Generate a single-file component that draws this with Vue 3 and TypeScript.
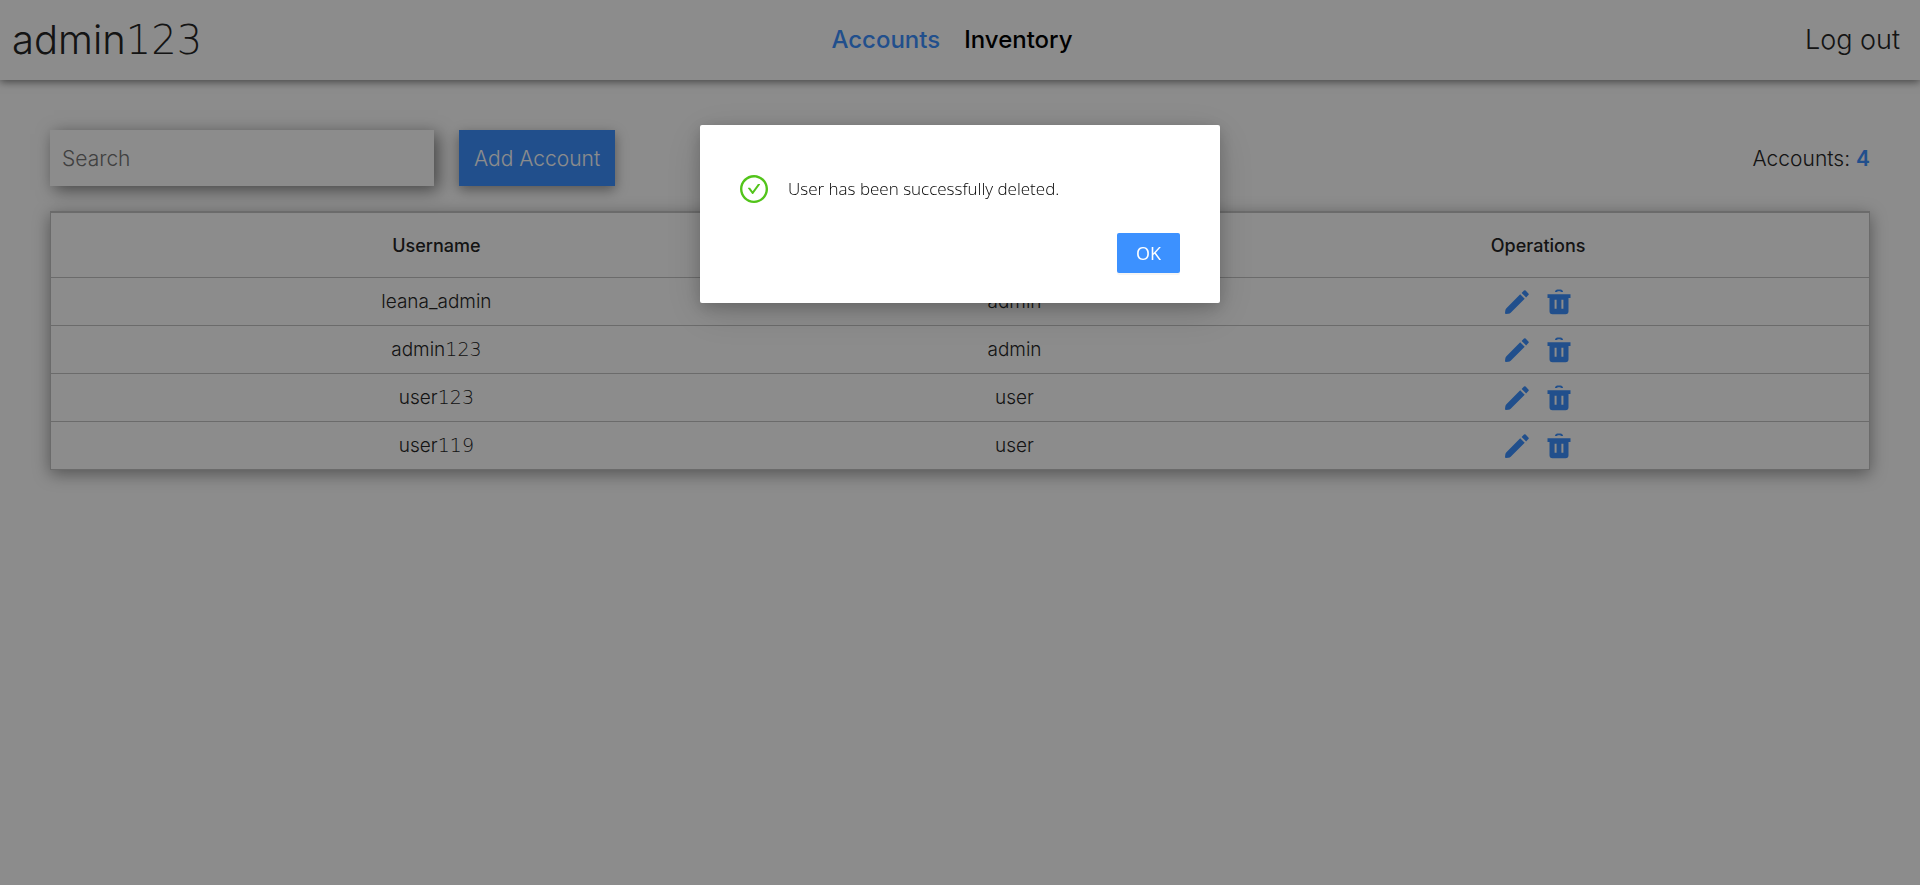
<script setup lang="ts">
import { ref } from 'vue'

interface Account {
  username: string
  role: string
}

interface NamePart {
  text: string
  numeric: boolean
}

const search = ref('')
const currentUser = 'admin123'
const accounts: Account[] = [
  { username: 'leana_admin', role: 'admin' },
  { username: 'admin123', role: 'admin' },
  { username: 'user123', role: 'user' },
  { username: 'user119', role: 'user' },
]

// Digits in a username are set in a wider face than its letters.
function nameParts(name: string): NamePart[] {
  return (name.match(/\d+|\D+/g) ?? []).map((text) => ({ text, numeric: /\d/.test(text) }))
}
</script>

<template>
  <div class="page">
    <header class="topbar">
      <span class="brand"><span v-for="(part, i) in nameParts(currentUser)" :key="i" :class="{ digits: part.numeric }">{{ part.text }}</span></span>
      <nav class="nav">
        <a href="#accounts" class="active">Accounts</a>
        <a href="#inventory">Inventory</a>
      </nav>
      <button type="button" class="logout">Log out</button>
    </header>

    <main class="content">
      <div class="toolbar">
        <input v-model="search" class="search" type="text" placeholder="Search" aria-label="Search" />
        <button type="button" class="add">Add Account</button>
        <p class="count">Accounts: <strong>{{ accounts.length }}</strong></p>
      </div>

      <table class="accounts">
        <colgroup>
          <col class="col-name" />
          <col class="col-role" />
          <col class="col-ops" />
        </colgroup>
        <thead>
          <tr>
            <th scope="col">Username</th>
            <th scope="col"></th>
            <th scope="col">Operations</th>
          </tr>
        </thead>
        <tbody>
          <tr v-for="account in accounts" :key="account.username">
            <td><span v-for="(part, i) in nameParts(account.username)" :key="i" :class="{ digits: part.numeric }">{{ part.text }}</span></td>
            <td>{{ account.role }}</td>
            <td>
              <div class="ops">
                <button type="button" aria-label="Edit">
                  <svg viewBox="0 0 24 24" aria-hidden="true">
                    <path d="M15.2 4.2 19.7 8.7 5.7 22.7Q4.8 23.6 3.4 23.8L1 24Q0 24 0 23L.3 20.6Q.5 19.2 1.4 18.2Z" />
                    <path d="M16.6 2.9 19 .6Q19.8-.2 20.6.6L23.4 3.4Q24.2 4.2 23.4 5L21.1 7.4Z" />
                  </svg>
                </button>
                <button type="button" aria-label="Delete">
                  <svg viewBox="0 0 24 24" aria-hidden="true">
                    <path d="M8 1.4Q8.6-.5 10.4-.5H13.6Q15.4-.5 16 1.4V2H14Q13.6 1.3 13 1.3H11Q10.4 1.3 10 2H8Z" />
                    <path
                      fill-rule="evenodd"
                      d="M.5 4.2H23.5V8H21.5V21.3Q21.5 24.3 18.5 24.3H5.5Q2.5 24.3 2.5 21.3V8H.5ZM7.6 9.8V18.8H9.6V9.8ZM14.4 9.8V18.8H16.4V9.8Z"
                    />
                  </svg>
                </button>
              </div>
            </td>
          </tr>
        </tbody>
      </table>
    </main>

    <div class="scrim">
      <section class="dialog" role="alertdialog" aria-modal="true" aria-labelledby="dialog-message">
        <div class="message">
          <svg class="check" viewBox="64 64 896 896" aria-hidden="true">
            <path d="M699 353h-46.9c-10.2 0-19.9 4.9-25.9 13.3L469 584.3l-71.2-98.8c-6-8.3-15.6-13.3-25.9-13.3H325c-6.5 0-10.3 7.4-6.5 12.7l124.6 172.8a31.8 31.8 0 0051.7 0l210.6-292c3.9-5.3.1-12.7-6.4-12.7z" />
            <path d="M512 64C264.6 64 64 264.6 64 512s200.6 448 448 448 448-200.6 448-448S759.4 64 512 64zm0 820c-205.4 0-372-166.6-372-372s166.6-372 372-372 372 166.6 372 372-166.6 372-372 372z" />
          </svg>
          <p id="dialog-message">User has been successfully deleted.</p>
        </div>
        <button type="button" class="ok">OK</button>
      </section>
    </div>
  </div>
</template>

<style>
body {
  margin: 0;
  background: #fff;
}
</style>

<style scoped>
.page {
  min-height: 100vh;
  font-family: Inter, "Open Sans", sans-serif;
  font-size: 18px;
  font-weight: 300;
  color: #262626;
}

button,
input {
  box-sizing: border-box;
  margin: 0;
  border: 0;
  font: inherit;
}

button {
  cursor: pointer;
}

.digits {
  font-family: "DejaVu Sans", sans-serif;
  font-weight: 200;
}

.topbar {
  display: grid;
  grid-template-columns: 1fr auto 1fr;
  align-items: center;
  box-sizing: border-box;
  height: 80px;
  padding: 0 20px 2px 12px;
  background: #fff;
  box-shadow: 0 2px 8px rgba(0, 0, 0, 0.5);
}

.brand {
  font-size: 40px;
}

.nav {
  display: flex;
  gap: 24px;
  padding-right: 8px;
  font-size: 24px;
  font-weight: 500;
}

.nav a {
  color: #000;
  text-decoration: none;
}

.nav .active {
  color: #3c91ff;
}

.logout {
  justify-self: end;
  padding: 0;
  background: none;
  color: inherit;
  font-size: 27px;
}

.content {
  padding: 50px;
}

.toolbar {
  display: flex;
  align-items: center;
  gap: 25px;
  margin-bottom: 25px;
  font-size: 21px;
}

.search {
  width: 384px;
  height: 56px;
  padding: 0 12px;
  background: #fff;
  color: inherit;
  box-shadow: 4px 4px 16px rgba(0, 0, 0, 0.5);
}

.search::placeholder {
  color: #757575;
  opacity: 1;
}

.add {
  height: 56px;
  padding: 0 15px;
  background: #3c91ff;
  color: #fff;
  box-shadow: 0 4px 12px rgba(0, 0, 0, 0.4);
}

.count {
  margin: 0 0 0 auto;
}

.count strong {
  color: #3c91ff;
  font-weight: 600;
}

.accounts {
  width: 100%;
  table-layout: fixed;
  border-collapse: separate;
  border-spacing: 0;
  border: 1px solid #c4c4c4;
  border-top-width: 2px;
  background: #fff;
  box-shadow: 0 4px 16px rgba(0, 0, 0, 0.4);
}

.col-name {
  width: 42.4%;
}

.col-role {
  width: 21.2%;
}

.col-ops {
  width: 36.4%;
}

.accounts th {
  height: 64px;
  padding: 0;
  font-weight: 500;
}

.accounts td {
  height: 47px;
  padding: 0;
  border-top: 1px solid #c4c4c4;
  font-size: 19px;
  line-height: 24px;
  text-align: center;
}

.ops {
  display: flex;
  justify-content: center;
  gap: 18px;
}

.ops button {
  display: flex;
  padding: 0;
  background: none;
}

.ops svg {
  width: 24px;
  height: 24px;
  overflow: visible;
  fill: #3c91ff;
}

.scrim {
  position: fixed;
  inset: 0;
  display: flex;
  align-items: flex-start;
  justify-content: center;
  padding-top: 125px;
  background: rgba(0, 0, 0, 0.45);
}

.dialog {
  display: flex;
  flex-direction: column;
  gap: 30px;
  box-sizing: border-box;
  width: 520px;
  max-width: 100%;
  padding: 50px 40px 30px;
  border-radius: 2px;
  background: #fff;
  color: #000;
  font-family: "Open Sans", "Noto Sans", sans-serif;
  box-shadow: 0 4px 16px rgba(0, 0, 0, 0.2), 0 10px 40px rgba(0, 0, 0, 0.15);
}

.message {
  display: flex;
  align-items: center;
  gap: 20px;
}

.message p {
  margin: 0;
  font-size: 17px;
  line-height: 28px;
}

.check {
  width: 28px;
  height: 28px;
  fill: #52c41a;
}

.ok {
  align-self: flex-end;
  height: 40px;
  padding: 0 19px;
  border-radius: 2px;
  background: #3c91ff;
  color: #fff;
  font-weight: 400;
  box-shadow: 0 2px 0 rgba(0, 0, 0, 0.04);
}
</style>
